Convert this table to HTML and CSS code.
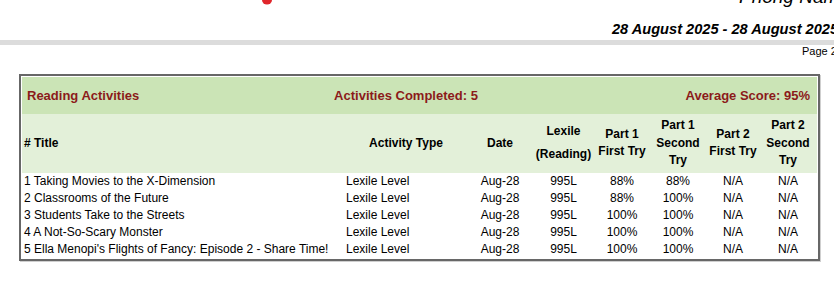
FILE: index.html
```html
<!DOCTYPE html>
<html>
<head>
<meta charset="utf-8">
<link rel="stylesheet" href="styles.css">
</head>
<body>
<header class="top">
  <div class="brand-row">
    <svg class="logo-tail" width="12" height="6" viewBox="0 0 12 6"><ellipse cx="6" cy="0" rx="5" ry="4.5" fill="#e0262b"/></svg>
    <span class="school">Phong Nam Elementary School</span>
  </div>
  <div class="dates">28 August 2025 - 28 August 2025</div>
</header>
<div class="rule"></div>
<div class="pageno">Page 2</div>

<div class="report-box">
  <table class="report">
    <colgroup>
      <col class="c-title"><col class="c-type"><col class="c-date"><col class="c-lex">
      <col class="c-p1f"><col class="c-p1s"><col class="c-p2f"><col class="c-p2s">
    </colgroup>
    <thead>
      <tr class="summary">
        <td colspan="8">
          <div class="summary-grid">
            <span class="s-left">Reading Activities</span>
            <span class="s-mid">Activities Completed: 5</span>
            <span class="s-right">Average Score: 95%</span>
          </div>
        </td>
      </tr>
      <tr class="heads">
        <th class="h-title"># Title</th>
        <th>Activity Type</th>
        <th>Date</th>
        <th class="h-lex">Lexile<br>(Reading)</th>
        <th>Part 1<br>First Try</th>
        <th>Part 1<br>Second<br>Try</th>
        <th>Part 2<br>First Try</th>
        <th>Part 2<br>Second<br>Try</th>
      </tr>
    </thead>
    <tbody>
      <tr><td class="t-title">1 Taking Movies to the X-Dimension</td><td class="t-type">Lexile Level</td><td>Aug-28</td><td>995L</td><td>88%</td><td>88%</td><td>N/A</td><td>N/A</td></tr>
      <tr><td class="t-title">2 Classrooms of the Future</td><td class="t-type">Lexile Level</td><td>Aug-28</td><td>995L</td><td>88%</td><td>100%</td><td>N/A</td><td>N/A</td></tr>
      <tr><td class="t-title">3 Students Take to the Streets</td><td class="t-type">Lexile Level</td><td>Aug-28</td><td>995L</td><td>100%</td><td>100%</td><td>N/A</td><td>N/A</td></tr>
      <tr><td class="t-title">4 A Not-So-Scary Monster</td><td class="t-type">Lexile Level</td><td>Aug-28</td><td>995L</td><td>100%</td><td>100%</td><td>N/A</td><td>N/A</td></tr>
      <tr><td class="t-title">5 Ella Menopi's Flights of Fancy: Episode 2 - Share Time!</td><td class="t-type">Lexile Level</td><td>Aug-28</td><td>995L</td><td>100%</td><td>100%</td><td>N/A</td><td>N/A</td></tr>
    </tbody>
  </table>
</div>
</body>
</html>
```

FILE: styles.css
```css
html, body {
  margin: 0;
  padding: 0;
  background: #ffffff;
}
body {
  width: 834px;
  height: 284px;
  overflow: hidden;
  font-family: "Liberation Sans", Arial, sans-serif;
  color: #000;
}
.top {
  white-space: nowrap;
}
.brand-row {
  display: flex;
  align-items: flex-start;
  height: 10px;
}
.logo-tail {
  display: block;
  margin-left: 261px;
  flex: none;
}
.school {
  margin-left: 466px;
  margin-top: -14px;
  font-size: 19px;
  line-height: 22px;
  font-style: italic;
  flex: none;
}
.dates {
  margin-top: 10px;
  padding-left: 612px;
  font-size: 14.6px;
  line-height: 18px;
  font-weight: bold;
  font-style: italic;
}
.rule {
  margin-top: 2px;
  height: 5px;
  background: #dcdcdc;
}
.pageno {
  padding-left: 802px;
  font-size: 11px;
  line-height: 13px;
  white-space: nowrap;
}
.report-box {
  margin: 16px 0 0 19px;
  width: 795px;
  border: 2px solid #676767;
  padding: 1px;
  background: #fff;
  box-shadow: 1px 1px 0 #cfcfcf;
}
.report {
  border-collapse: collapse;
  table-layout: fixed;
  width: 795px;
  font-size: 12px;
}
.c-title { width: 322px; }
.c-type { width: 124px; }
.c-date { width: 64px; }
.c-lex { width: 63px; }
.c-p1f { width: 54px; }
.c-p1s { width: 58px; }
.c-p2f { width: 52px; }
.c-p2s { width: 58px; }

.summary td {
  background: #cbe4b6;
  padding: 10px 0;
  font-size: 13px;
  line-height: 17px;
  font-weight: bold;
  color: #8b1a1a;
}
.summary-grid {
  display: grid;
  grid-template-columns: 300px 168px 1fr;
  white-space: nowrap;
}
.s-left { padding-left: 5px; }
.s-mid { text-align: center; }
.s-right { text-align: right; padding-right: 7px; }

.heads th {
  background: #e3f0d9;
  padding: 3px 0;
  font-size: 12px;
  line-height: 17.5px;
  font-weight: bold;
  text-align: center;
  vertical-align: middle;
}
.heads .h-title {
  text-align: left;
  padding-left: 2px;
}
.heads .h-lex {
  line-height: 23px;
}
tbody td {
  padding: 0;
  line-height: 17px;
  text-align: center;
  white-space: nowrap;
}
tbody .t-title,
tbody .t-type {
  text-align: left;
  padding-left: 2px;
}
```
